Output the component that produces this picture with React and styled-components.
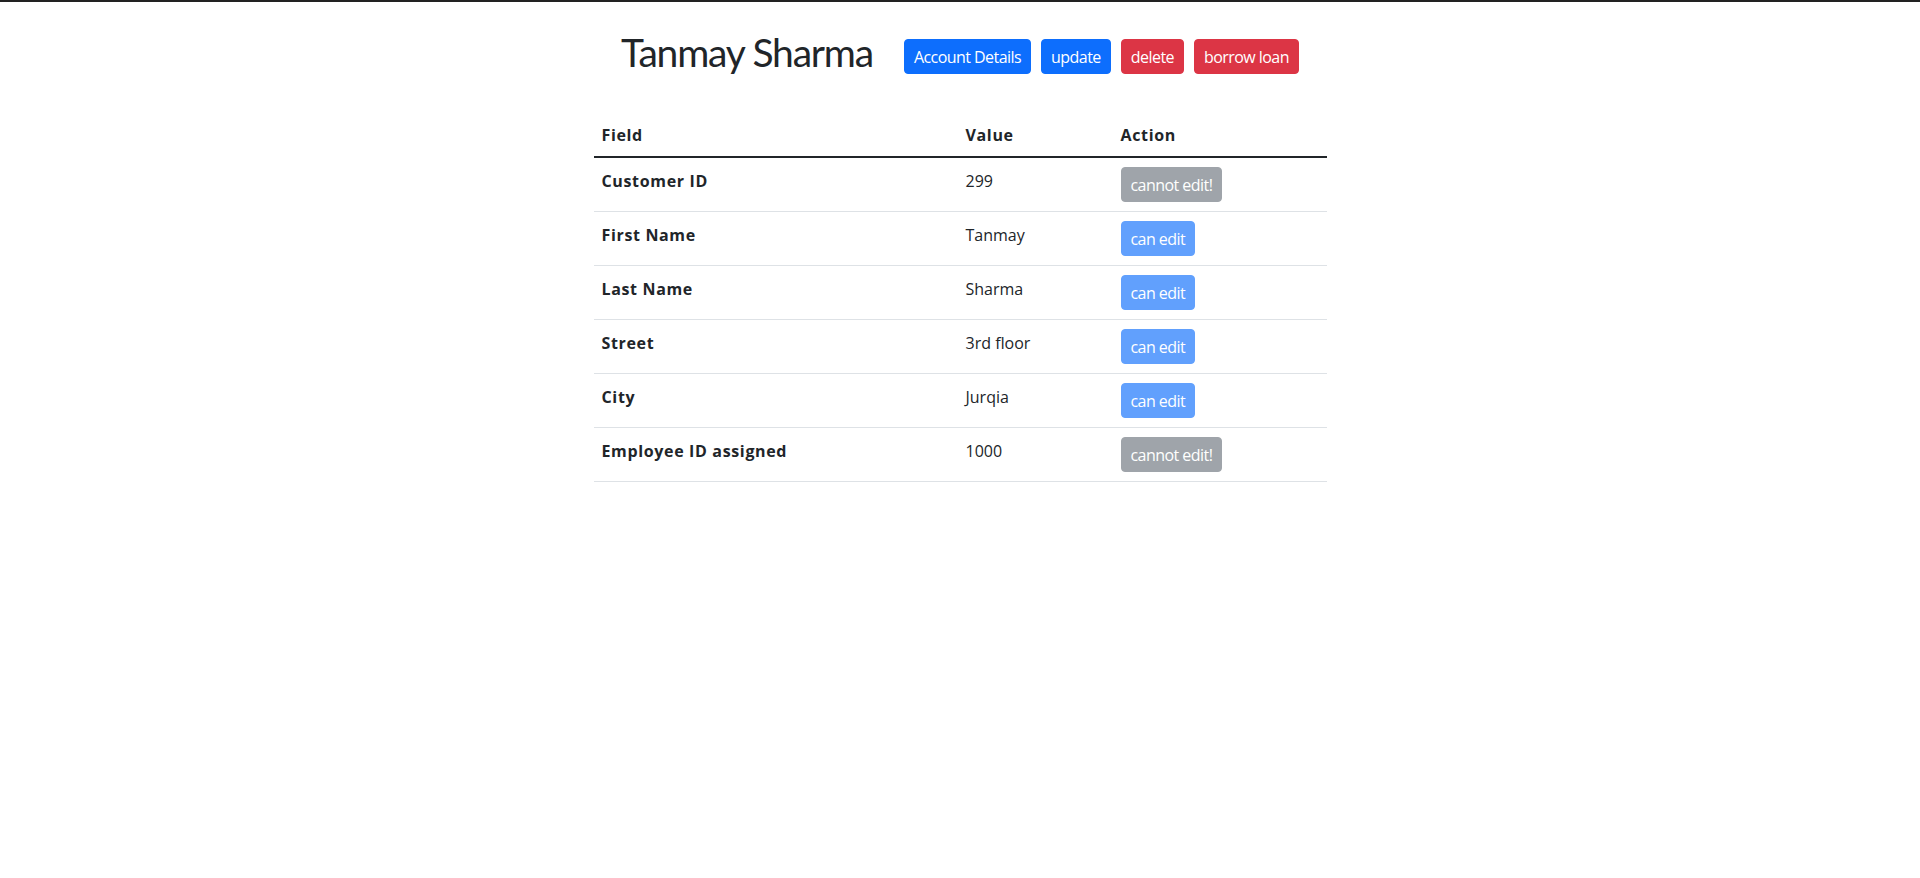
import React from 'react';
import styled, { createGlobalStyle, css } from 'styled-components';

const GlobalStyle = createGlobalStyle`
  html, body { margin: 0; padding: 0; background: #fff; }
  body {
    font-family: "Open Sans", "Noto Sans", sans-serif;
    color: #212529;
    font-size: 16px;
    line-height: 1.5;
    border-top: 2px solid #222;
  }
  * { box-sizing: border-box; }
`;

const Page = styled.main`
  display: flex;
  flex-direction: column;
  align-items: center;
  padding-top: 26px;
`;

const Header = styled.header`
  display: flex;
  align-items: flex-start;
  gap: 31px;
`;

const Name = styled.h1`
  margin: 0;
  font-family: Lato, "Open Sans", sans-serif;
  font-size: 39px;
  font-weight: 400;
  letter-spacing: -1.2px;
  line-height: 48px;
`;

const Actions = styled.div`
  display: flex;
  gap: 10px;
  margin-top: 11px;
`;

const variants = {
  primary: '#0d6efd',
  danger: '#dc3545',
  secondary: '#6c757d',
};

const Button = styled.button`
  font-family: "Open Sans", sans-serif;
  font-size: 16px;
  letter-spacing: -0.55px;
  height: 35px;
  padding: 0 9px;
  border: 1px solid ${p => variants[p.$variant]};
  background: ${p => variants[p.$variant]};
  color: #fff;
  border-radius: 4px;
  cursor: pointer;
  ${p => p.$faded && css`
    opacity: 0.65;
    cursor: default;
  `}
`;

const Table = styled.table`
  margin-top: 40px;
  width: 733px;
  table-layout: fixed;
  border-collapse: collapse;
`;

const HeadCell = styled.th`
  text-align: left;
  font-weight: 700;
  letter-spacing: 0.65px;
  padding: 7px 8px 9px;
  border-bottom: 2px solid #212529;
`;

const Row = styled.tr`
  border-bottom: 1px solid #dee2e6;
`;

const Cell = styled.td`
  vertical-align: top;
  padding: ${p => (p.$action ? '9px 8px' : '11px 8px 0')};
  height: 53px;
  ${p => p.$bold && css`
    font-weight: 700;
    letter-spacing: 0.65px;
  `}
`;

const rows = [
  { field: 'Customer ID', value: '299', editable: false },
  { field: 'First Name', value: 'Tanmay', editable: true },
  { field: 'Last Name', value: 'Sharma', editable: true },
  { field: 'Street', value: '3rd floor', editable: true },
  { field: 'City', value: 'Jurqia', editable: true },
  { field: 'Employee ID assigned', value: '1000', editable: false },
];

export default function App() {
  return (
    <>
      <GlobalStyle />
      <Page>
        <Header>
          <Name>Tanmay Sharma</Name>
          <Actions>
            <Button $variant="primary">Account Details</Button>
            <Button $variant="primary">update</Button>
            <Button $variant="danger">delete</Button>
            <Button $variant="danger">borrow loan</Button>
          </Actions>
        </Header>
        <Table>
          <colgroup>
            <col style={{ width: 364 }} />
            <col style={{ width: 155 }} />
            <col style={{ width: 214 }} />
          </colgroup>
          <thead>
            <tr>
              <HeadCell>Field</HeadCell>
              <HeadCell>Value</HeadCell>
              <HeadCell>Action</HeadCell>
            </tr>
          </thead>
          <tbody>
            {rows.map(r => (
              <Row key={r.field}>
                <Cell $bold>{r.field}</Cell>
                <Cell>{r.value}</Cell>
                <Cell $action>
                  {r.editable ? (
                    <Button $variant="primary" $faded>can edit</Button>
                  ) : (
                    <Button $variant="secondary" $faded>cannot edit!</Button>
                  )}
                </Cell>
              </Row>
            ))}
          </tbody>
        </Table>
      </Page>
    </>
  );
}
